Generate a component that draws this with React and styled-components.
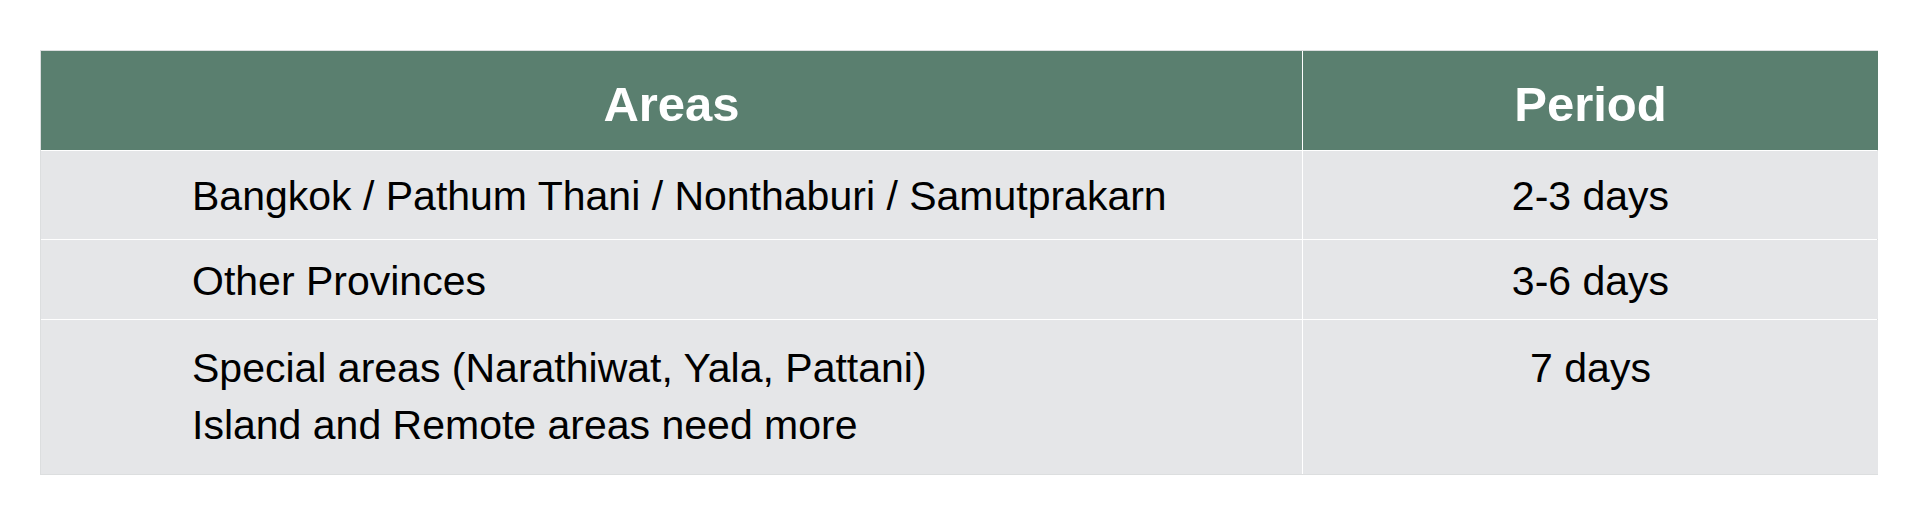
import React from 'react';
import styled, { createGlobalStyle } from 'styled-components';

const GlobalStyle = createGlobalStyle`
  html, body {
    margin: 0;
    padding: 0;
    background: #ffffff;
  }
  body {
    font-family: 'Liberation Sans', Arial, sans-serif;
    color: #000000;
  }
`;

const Page = styled.div`
  padding: 50px 42px 51px 40px;
`;

const Table = styled.div`
  display: grid;
  grid-template-columns: 1261px 575px;
  grid-template-rows: 99px 88px 79px 154px;
  gap: 1px;
  background: #ffffff;
  border: 1px solid #dcdedf;
`;

const HeadCell = styled.div`
  background: #5a7f6f;
  color: #ffffff;
  font-weight: 700;
  font-size: 49px;
  display: flex;
  align-items: center;
  justify-content: center;
  padding-top: 7px;
`;

const Cell = styled.div`
  background: #e5e6e8;
  font-size: 41px;
  line-height: 57px;
  display: flex;
  flex-direction: column;
  justify-content: ${({ $top }) => ($top ? 'flex-start' : 'center')};
  align-items: ${({ $center }) => ($center ? 'center' : 'flex-start')};
  padding-top: ${({ $top }) => ($top ? '20px' : '3px')};
  padding-left: ${({ $center }) => ($center ? '0' : '151px')};
`;

const rows = [
  { area: ['Bangkok / Pathum Thani / Nonthaburi / Samutprakarn'], period: '2-3 days' },
  { area: ['Other Provinces'], period: '3-6 days' },
  {
    area: ['Special areas (Narathiwat, Yala, Pattani)', 'Island and Remote areas need more'],
    period: '7 days',
    top: true,
  },
];

const App = () => (
  <>
    <GlobalStyle />
    <Page>
      <Table>
        <HeadCell>Areas</HeadCell>
        <HeadCell>Period</HeadCell>
        {rows.map(row => (
          <React.Fragment key={row.period}>
            <Cell $top={row.top}>
              {row.area.map(line => (
                <span key={line}>{line}</span>
              ))}
            </Cell>
            <Cell $top={row.top} $center>
              {row.period}
            </Cell>
          </React.Fragment>
        ))}
      </Table>
    </Page>
  </>
);

export default App;
